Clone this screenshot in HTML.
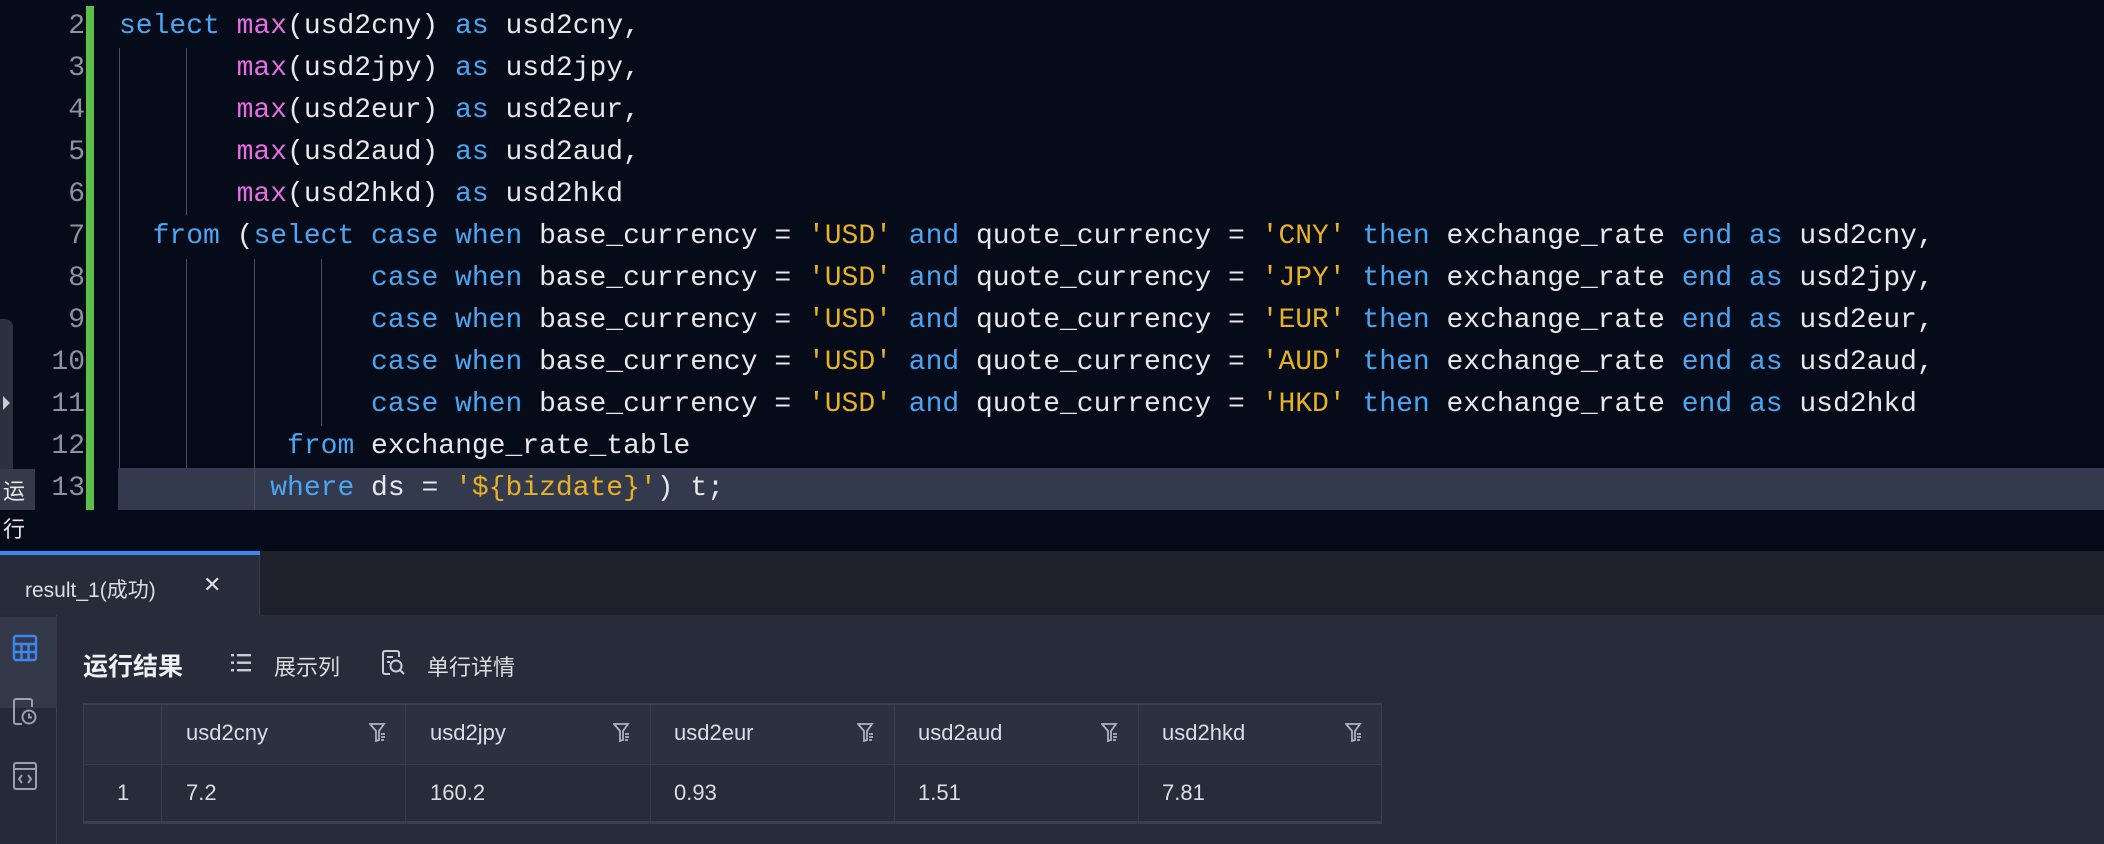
<!DOCTYPE html>
<html><head><meta charset="utf-8"><style>
*{margin:0;padding:0;box-sizing:border-box}
html,body{width:2104px;height:844px;overflow:hidden}
body{background:#060b1a;position:relative;font-family:"Liberation Sans","Noto Sans CJK SC",sans-serif}
.code{position:absolute;left:119px;top:6px;font-family:"Liberation Mono",monospace;font-size:28px;color:#e8e8ea}
.code div{height:42px;line-height:42px;white-space:pre}
.ln{position:absolute;right:2019px;top:6px;font-family:"Liberation Mono",monospace;font-size:28px;color:#8d919b;text-align:right}
.ln div{height:42px;line-height:42px}
.k{color:#4aa6f2}.f{color:#e66ee0}.s{color:#e7b126}
.g{position:absolute;width:1px;background:#4a4f5c}
.abs{position:absolute}
</style></head><body>
<div class="abs" style="left:118px;top:468px;width:1986px;height:42px;background:#333a4e"></div>
<div class="abs" style="left:86px;top:6px;width:8px;height:504px;background:#5ac04a"></div>
<div class="g" style="left:119px;top:48px;height:420px"></div>
<div class="g" style="left:186px;top:48px;height:167px"></div>
<div class="g" style="left:186px;top:259px;height:209px"></div>
<div class="g" style="left:254px;top:259px;height:251px"></div>
<div class="g" style="left:321px;top:259px;height:167px"></div>
<div class="ln"><div>2</div><div>3</div><div>4</div><div>5</div><div>6</div><div>7</div><div>8</div><div>9</div><div>10</div><div>11</div><div>12</div><div>13</div></div>
<div class="code"><div><span class="k">select</span> <span class="f">max</span>(usd2cny) <span class="k">as</span> usd2cny,</div><div>       <span class="f">max</span>(usd2jpy) <span class="k">as</span> usd2jpy,</div><div>       <span class="f">max</span>(usd2eur) <span class="k">as</span> usd2eur,</div><div>       <span class="f">max</span>(usd2aud) <span class="k">as</span> usd2aud,</div><div>       <span class="f">max</span>(usd2hkd) <span class="k">as</span> usd2hkd</div><div>  <span class="k">from</span> (<span class="k">select case when</span> base_currency = <span class="s">'USD'</span> <span class="k">and</span> quote_currency = <span class="s">'CNY'</span> <span class="k">then</span> exchange_rate <span class="k">end as</span> usd2cny,</div><div>               <span class="k">case when</span> base_currency = <span class="s">'USD'</span> <span class="k">and</span> quote_currency = <span class="s">'JPY'</span> <span class="k">then</span> exchange_rate <span class="k">end as</span> usd2jpy,</div><div>               <span class="k">case when</span> base_currency = <span class="s">'USD'</span> <span class="k">and</span> quote_currency = <span class="s">'EUR'</span> <span class="k">then</span> exchange_rate <span class="k">end as</span> usd2eur,</div><div>               <span class="k">case when</span> base_currency = <span class="s">'USD'</span> <span class="k">and</span> quote_currency = <span class="s">'AUD'</span> <span class="k">then</span> exchange_rate <span class="k">end as</span> usd2aud,</div><div>               <span class="k">case when</span> base_currency = <span class="s">'USD'</span> <span class="k">and</span> quote_currency = <span class="s">'HKD'</span> <span class="k">then</span> exchange_rate <span class="k">end as</span> usd2hkd</div><div>          <span class="k">from</span> exchange_rate_table</div><div>         <span class="k">where</span> ds = <span class="s">'${bizdate}'</span>) t;</div></div>
<div class="abs" style="left:-10px;top:319px;width:23px;height:180px;background:#2c3140;border-radius:8px"></div>
<div class="abs" style="left:3px;top:396px;width:0;height:0;border-top:7px solid transparent;border-bottom:7px solid transparent;border-left:7px solid #c8ccd4"></div>
<div class="abs" style="left:0;top:469px;width:35px;height:41px;background:#353a4a"></div>
<div class="abs" style="left:3px;top:474px;font-size:22px;color:#e8e8ea">运</div>
<div class="abs" style="left:3px;top:512px;font-size:22px;color:#e8e8ea">行</div>

<div class="abs" style="left:0;top:551px;width:2104px;height:64px;background:#1e212b"></div>
<div class="abs" style="left:0;top:551px;width:260px;height:64px;background:#282c3a;border-right:1px solid #3a3f4d"></div>
<div class="abs" style="left:0;top:551px;width:260px;height:4px;background:#3b86f0"></div>
<div class="abs" style="left:25px;top:574px;font-size:21px;color:#dcdde2">result_1(成功)</div>
<div class="abs" style="left:203px;top:572px;font-size:22px;color:#dcdde2">✕</div>

<div class="abs" style="left:0;top:615px;width:2104px;height:229px;background:#272b3a"></div>
<div class="abs" style="left:0;top:615px;width:57px;height:229px;background:#252938;border-right:1px solid #3a3f4d"></div>
<div class="abs" style="left:0;top:617px;width:57px;height:91px;background:#343949"></div>
<svg class="abs" style="left:12px;top:634px" width="26" height="28" viewBox="0 0 26 28" fill="none" stroke="#3b86f0" stroke-width="2.4"><rect x="2" y="2" width="22" height="24" rx="2"/><path d="M2 10h22M2 18h22M9.5 10v16M16.5 10v16"/></svg>
<svg class="abs" style="left:12px;top:697px" width="26" height="30" viewBox="0 0 26 30" fill="none" stroke="#9aa0ad" stroke-width="2"><path d="M10 27H4a2 2 0 0 1-2-2V4a2 2 0 0 1 2-2h14a2 2 0 0 1 2 2v6"/><circle cx="17" cy="20" r="6.5"/><path d="M17 16.5v4h3"/></svg>
<svg class="abs" style="left:12px;top:761px" width="26" height="30" viewBox="0 0 26 30" fill="none" stroke="#9aa0ad" stroke-width="2"><rect x="2" y="2" width="22" height="26" rx="2"/><path d="M2 8h22M10 14l-3 4 3 4M16 14l3 4-3 4"/></svg>

<div class="abs" style="left:83px;top:647px;font-size:25px;font-weight:bold;color:#f0f0f2">运行结果</div>
<svg class="abs" style="left:230px;top:651px" width="22" height="24" viewBox="0 0 22 24" fill="#c8ccd4"><rect x="1" y="3" width="3" height="2.4"/><rect x="7" y="3" width="14" height="2.4"/><rect x="1" y="10.5" width="3" height="2.4"/><rect x="7" y="10.5" width="14" height="2.4"/><rect x="1" y="18" width="3" height="2.4"/><rect x="7" y="18" width="14" height="2.4"/></svg>
<div class="abs" style="left:274px;top:650px;font-size:22px;color:#dcdde2">展示列</div>
<svg class="abs" style="left:381px;top:649px" width="26" height="28" viewBox="0 0 26 28" fill="none" stroke="#c8ccd4" stroke-width="2"><path d="M9 25H4a2 2 0 0 1-2-2V4a2 2 0 0 1 2-2h12a2 2 0 0 1 2 2v4"/><path d="M6 8h6M6 13h3"/><circle cx="15" cy="17" r="5.5"/><path d="M19 21l4 4"/></svg>
<div class="abs" style="left:427px;top:650px;font-size:22px;color:#dcdde2">单行详情</div>

<div class="abs" style="left:83px;top:703px;width:1299px;height:121px;border:2px solid #3a3f4e;border-width:2px 1px 3px 1px;background:#272b3a"></div>
<div class="abs" style="left:84px;top:705px;width:1297px;height:59px;background:#2c3142"></div>
<div class="abs" style="left:84px;top:764px;width:1297px;height:1px;background:#383d4c"></div>
<div class="abs" style="left:161px;top:705px;width:1px;height:116px;background:#383d4c"></div>
<div class="abs" style="left:405px;top:705px;width:1px;height:116px;background:#383d4c"></div>
<div class="abs" style="left:650px;top:705px;width:1px;height:116px;background:#383d4c"></div>
<div class="abs" style="left:894px;top:705px;width:1px;height:116px;background:#383d4c"></div>
<div class="abs" style="left:1138px;top:705px;width:1px;height:116px;background:#383d4c"></div>
<div style="position:absolute;left:0;top:0;font-size:22px;color:#dcdde2">
<div class="abs" style="left:186px;top:720px">usd2cny</div>
<div class="abs" style="left:430px;top:720px">usd2jpy</div>
<div class="abs" style="left:674px;top:720px">usd2eur</div>
<div class="abs" style="left:918px;top:720px">usd2aud</div>
<div class="abs" style="left:1162px;top:720px">usd2hkd</div>
<div class="abs" style="left:117px;top:780px">1</div>
<div class="abs" style="left:186px;top:780px">7.2</div>
<div class="abs" style="left:430px;top:780px">160.2</div>
<div class="abs" style="left:674px;top:780px">0.93</div>
<div class="abs" style="left:918px;top:780px">1.51</div>
<div class="abs" style="left:1162px;top:780px">7.81</div>
</div>
<svg width="0" height="0" style="position:absolute"><defs><g id="fi" fill="none" stroke="#aeb3bd" stroke-width="1.8"><path d="M1 2h14l-5 7v9l-3 1V9z"/><path d="M12 12h4M12 15h4M12 18h3"/></g></defs></svg>
<svg class="abs" style="left:369px;top:722px" width="18" height="22"><use href="#fi"/></svg>
<svg class="abs" style="left:613px;top:722px" width="18" height="22"><use href="#fi"/></svg>
<svg class="abs" style="left:857px;top:722px" width="18" height="22"><use href="#fi"/></svg>
<svg class="abs" style="left:1101px;top:722px" width="18" height="22"><use href="#fi"/></svg>
<svg class="abs" style="left:1345px;top:722px" width="18" height="22"><use href="#fi"/></svg>
</body></html>
